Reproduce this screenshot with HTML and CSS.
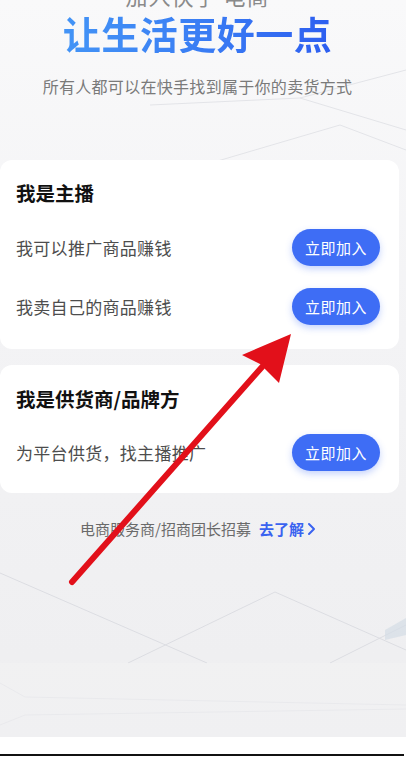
FILE: index.html
```html
<!DOCTYPE html>
<html lang="zh">
<head>
<meta charset="utf-8">
<title>加入快手电商</title>
<link rel="stylesheet" href="styles.css">
</head>
<body>
<div class="screen">
  <svg class="deco" width="406" height="737" viewBox="0 0 406 737">
    <g fill="none" stroke="#e3e4e8" stroke-width="1">
      <polyline points="150,105 300,98 406,70"/>
      <polyline points="300,98 406,130"/>
      <polyline points="0,300 120,190 200,170"/>
      <polyline points="170,175 340,125 406,150"/>
    </g>
    <g fill="none" stroke="#dcdde2" stroke-width="1">
      <polyline points="0,573 207,663"/>
      <polyline points="128,663 275,592 406,650"/>
      <polyline points="330,663 406,625"/>
      <polyline points="0,683 25,697 406,705"/>
      <polyline points="0,725 25,715 406,709"/>
    </g>
    <rect x="0" y="663" width="406" height="74" fill="#f1f1f3" opacity="0.6"/>
    <polygon points="385,630 406,618 406,635 385,640" fill="#d4dde6" opacity="0.7"/>
  </svg>

  <main class="content">
    <header class="hero">
      <p class="kicker">加入快手 电商</p>
      <h1 class="title">让生活更好一点</h1>
      <p class="subtitle">所有人都可以在快手找到属于你的卖货方式</p>
    </header>

    <section class="card">
      <h2 class="card-title">我是主播</h2>
      <div class="rows">
        <div class="row">
          <span class="row-text">我可以推广商品赚钱</span>
          <button class="join">立即加入</button>
        </div>
        <div class="row">
          <span class="row-text">我卖自己的商品赚钱</span>
          <button class="join">立即加入</button>
        </div>
      </div>
    </section>

    <section class="card card-b">
      <h2 class="card-title">我是供货商/品牌方</h2>
      <div class="rows">
        <div class="row">
          <span class="row-text">为平台供货，找主播推广</span>
          <button class="join">立即加入</button>
        </div>
      </div>
    </section>

    <p class="footer">电商服务商/招商团长招募<a class="more">去了解<svg class="chev" width="9" height="14" viewBox="0 0 9 14"><polyline points="2,2 7,7 2,12" fill="none" stroke="#3a63f0" stroke-width="2" stroke-linecap="round" stroke-linejoin="round"/></svg></a></p>
  </main>

  <svg class="arrow" width="406" height="737" viewBox="0 0 406 737">
    <line x1="72" y1="582" x2="262" y2="367" stroke="#e2101a" stroke-width="6" stroke-linecap="round"/>
    <polygon points="291,334 242,355 260,364 279,383" fill="#e2101a"/>
  </svg>
</div>
<div class="bottom">
  <div class="rule"></div>
</div>
</body>
</html>
```

FILE: styles.css
```css
* { box-sizing: border-box; }
html, body {
  margin: 0;
  padding: 0;
  background: #ffffff;
  font-family: "Noto Sans CJK SC", "Noto Sans", sans-serif;
}
.screen {
  position: relative;
  width: 406px;
  height: 737px;
  overflow: hidden;
  background: linear-gradient(180deg, #f9f9fa 0%, #f3f3f5 45%, #eeeef0 100%);
}
.deco {
  position: absolute;
  left: 0;
  top: 0;
}
.arrow {
  position: absolute;
  left: 0;
  top: 0;
  pointer-events: none;
}
.content {
  position: relative;
  display: flex;
  flex-direction: column;
  width: 399px;
}
.hero {
  display: flex;
  flex-direction: column;
  align-items: center;
  padding-right: 4px;
}
.kicker {
  margin: -16px 0 0;
  font-size: 22px;
  line-height: 22px;
  color: #8a8a8a;
  letter-spacing: 1px;
}
.title {
  margin: 7px 0 0;
  font-size: 38px;
  line-height: 40px;
  font-weight: 700;
  letter-spacing: 0.5px;
  background: linear-gradient(90deg, #4394f6 0%, #3a7ef4 50%, #2d5ef0 100%);
  -webkit-background-clip: text;
  background-clip: text;
  color: transparent;
}
.subtitle {
  margin: 22px 0 0;
  font-size: 16px;
  line-height: 22px;
  color: #7a7a7a;
  letter-spacing: 0.3px;
}
.card {
  margin-top: 63px;
  background: #ffffff;
  border-radius: 12px;
  padding: 20px 19px 24px 16px;
}
.card-b {
  margin-top: 16px;
  padding-top: 21px;
  padding-bottom: 22px;
}
.card-title {
  margin: 0;
  font-size: 19.5px;
  line-height: 26px;
  font-weight: 700;
  color: #111111;
}
.rows {
  display: flex;
  flex-direction: column;
  gap: 22px;
  margin-top: 23px;
}
.card-b .rows { margin-top: 22px; }
.row {
  display: flex;
  align-items: center;
  justify-content: space-between;
  height: 37px;
}
.row-text {
  font-size: 17px;
  color: #4d4d4d;
  letter-spacing: 0.3px;
}
.join {
  width: 88px;
  height: 37px;
  border: none;
  border-radius: 19px;
  background: #3e6df5;
  color: #ffffff;
  font-family: inherit;
  font-size: 15px;
  letter-spacing: 0.5px;
  box-shadow: 0 3px 7px rgba(62, 109, 245, 0.3);
  padding: 0;
}
.footer {
  margin: 26px 0 0;
  display: flex;
  justify-content: center;
  align-items: center;
  font-size: 15px;
  line-height: 20px;
  color: #6a6a6a;
  padding-right: 3px;
}
.more {
  display: flex;
  align-items: center;
  margin-left: 8px;
  color: #3a63f0;
  font-weight: 700;
}
.chev {
  margin-left: 3px;
}
.bottom {
  height: 34px;
  padding-top: 17px;
}
.rule {
  width: 404px;
  height: 1.5px;
  background: #111111;
}
```
